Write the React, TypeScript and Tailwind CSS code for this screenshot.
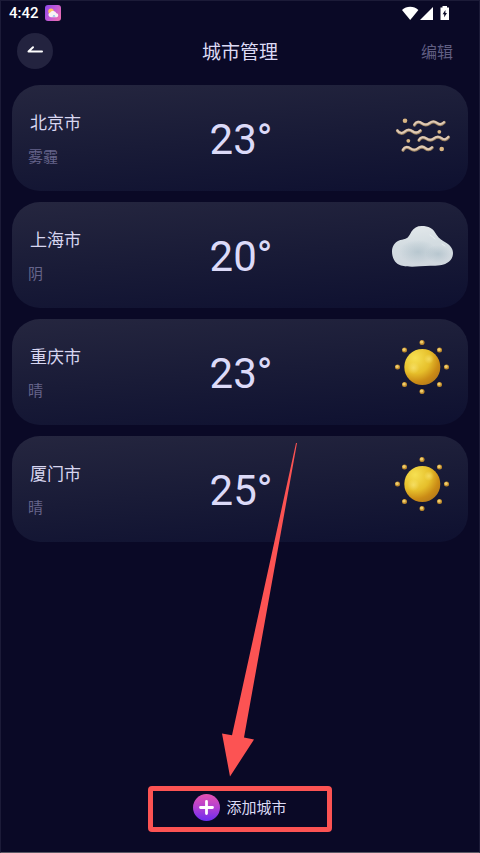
type IconName = 'haze' | 'cloud' | 'sun';

interface City {
  name: string;
  condition: string;
  temp: number;
  icon: IconName;
}

const cities: City[] = [
  { name: '北京市', condition: '雾霾', temp: 23, icon: 'haze' },
  { name: '上海市', condition: '阴', temp: 20, icon: 'cloud' },
  { name: '重庆市', condition: '晴', temp: 23, icon: 'sun' },
  { name: '厦门市', condition: '晴', temp: 25, icon: 'sun' },
];

// small beads around the sun
const rays = [
  [32, 7.5], [49.5, 15], [56.5, 32], [49.5, 49.5],
  [32, 56.5], [14.5, 49.5], [7.5, 32], [14.5, 15],
];

function SunIcon({ id }: { id: string }) {
  return (
    <svg viewBox="0 0 64 64" className="size-16" aria-hidden="true">
      <defs>
        <radialGradient id={`${id}-body`} cx="0.3" cy="0.25" r="0.85">
          <stop offset="0" stopColor="#f6e052" />
          <stop offset="0.5" stopColor="#e6bf2b" />
          <stop offset="0.78" stopColor="#cb8c16" />
          <stop offset="1" stopColor="#b5791a" />
        </radialGradient>
        <radialGradient id={`${id}-glow`}>
          <stop offset="0" stopColor="#fff08a" stopOpacity="0.5" />
          <stop offset="1" stopColor="#fff08a" stopOpacity="0" />
        </radialGradient>
      </defs>
      <circle cx="32.3" cy="32" r="18" fill={`url(#${id}-body)`} />
      <circle cx="23.5" cy="33" r="6" fill={`url(#${id}-glow)`} />
      <circle cx="39" cy="24" r="5" fill={`url(#${id}-glow)`} />
      {rays.map(([x, y]) => (
        <g key={`${x}-${y}`}>
          <circle cx={x} cy={y} r="2.5" fill="#c18c2c" />
          <circle cx={x - 0.4} cy={y - 0.5} r="1.6" fill="#efcd6c" />
        </g>
      ))}
    </svg>
  );
}

function CloudIcon({ id }: { id: string }) {
  return (
    <svg viewBox="0 0 64 64" className="size-16" aria-hidden="true">
      <defs>
        <linearGradient id={`${id}-body`} x1="0" y1="0" x2="0.15" y2="1">
          <stop offset="0" stopColor="#e4e9ec" />
          <stop offset="0.5" stopColor="#d3dce1" />
          <stop offset="1" stopColor="#d0d7de" />
        </linearGradient>
        <radialGradient id={`${id}-shade`}>
          <stop offset="0" stopColor="#a9bcc6" stopOpacity="0.65" />
          <stop offset="1" stopColor="#a9bcc6" stopOpacity="0" />
        </radialGradient>
      </defs>
      <path
        d="M31.7 8C27 8 23.800 10 21.500 13.500C19.500 17 18.500 19.700 15.500 20.700C13 21.500 11 21.600 8.500 22.700C4.500 24.600 2 28.500 2 33.500C2 40.500 5.500 46 11 47.500C17 49 24 48.800 30 48.300C37 47.700 44 48.200 50 47.300C58 46.200 63 41.500 63 35C63 31 60.500 27.500 56.500 25C52.500 22.500 49 20.500 46.700 17C44.500 13.500 43.500 11.500 40.500 9.900C38 8.500 35 8 31.700 8Z"
        fill={`url(#${id}-body)`}
      />
      <ellipse cx="28" cy="34" rx="19" ry="12" fill={`url(#${id}-shade)`} />
      <ellipse cx="48" cy="36" rx="13" ry="9" fill={`url(#${id}-shade)`} />
      <path d="M40 17q3 2 5 4M52 26l3 2" stroke="#f4f7f8" strokeWidth="1" strokeLinecap="round" fill="none" opacity="0.6" />
    </svg>
  );
}

const waves = [
  'M24.500 24c2-3.500 5-3.300 7.500-1.500s5 2 7.500 0s5-2.400 7.500-.3s5 1.600 7.200-.7',
  'M7.500 29.800c2 3 5 3.200 7.500 1s5-2.200 7.500-.3s5.500 2 8-.7',
  'M29 39.300c2-3.500 5-3.300 7.500-1.500s5 2 7.500 0s5-2.400 7.500-.3s5 1.400 7-1.200',
  'M13 49.200c2-3.500 5-3.300 7.500-1.500s5 2 7.500 0s5-2.400 7.500-.3s4.500 1.600 6.700-.7',
];

function HazeIcon() {
  return (
    <svg viewBox="0 0 64 64" className="size-16" aria-hidden="true">
      <g fill="none" strokeLinecap="round" strokeLinejoin="round">
        {waves.map((d) => (
          <g key={d}>
            <path d={d} stroke="#9c8260" strokeWidth="3.200" />
            <path d={d} stroke="#dfcab6" strokeWidth="2" transform="translate(-0.2 -0.4)" />
          </g>
        ))}
      </g>
      <g fill="#d9b684">
        <circle cx="15" cy="19.800" r="2.300" />
        <circle cx="49.300" cy="30.800" r="1.900" />
        <circle cx="18.300" cy="39.800" r="1.900" />
        <circle cx="51.700" cy="48" r="2.300" />
      </g>
    </svg>
  );
}

function WeatherIcon({ name, id }: { name: IconName; id: string }) {
  if (name === 'haze') return <HazeIcon />;
  if (name === 'cloud') return <CloudIcon id={id} />;
  return <SunIcon id={id} />;
}

function StatusBar() {
  return (
    <div className="flex h-6 items-center justify-between pl-2 pr-7">
      <div className="flex items-center gap-1.5">
        <span className="font-[Roboto,sans-serif] text-[15px] font-medium leading-5 text-white">4:42</span>
        <svg viewBox="0 0 16 16" className="size-4" aria-hidden="true">
          <defs>
            <linearGradient id="app-bg" x1="0" y1="0" x2="1" y2="0.6">
              <stop offset="0" stopColor="#8b46ea" />
              <stop offset="0.55" stopColor="#c05ad8" />
              <stop offset="1" stopColor="#e56bb5" />
            </linearGradient>
          </defs>
          <rect width="16" height="16" rx="3" fill="url(#app-bg)" />
          <circle cx="6" cy="6.300" r="2.700" fill="#ffc45c" />
          <path d="M5.800 12.300a2.500 2.500 0 0 1-.6-4.900a3.500 3.500 0 0 1 6.200.8a2.100 2.100 0 0 1 .4 4.100z" fill="#f7f3f5" />
          <path d="M7.500 11.500q1.500-2.500 3 0z" fill="#6fb6e8" />
        </svg>
      </div>
      <svg viewBox="0 0 50 16" className="h-4 w-[50px]" fill="#fff" aria-hidden="true">
        <path d="M9.200 15L1 5C3.500 2.800 6 1.800 9.200 1.800s5.700 1 8.200 3.200z" />
        <path d="M32 2v13H19z" />
        <path fillRule="evenodd" d="M39.500 2.500h2V1h4.500v1.500h2V15h-8.500zM44.400 5l-2.800 4.300h1.600v3l2.800-4.300h-1.600z" />
      </svg>
    </div>
  );
}

function Header() {
  return (
    <header className="grid h-[52px] grid-cols-[1fr_auto_1fr] items-center px-4">
      <button type="button" aria-label="返回" className="flex size-9 items-center justify-center rounded-full bg-[#23233f]">
        <svg viewBox="0 0 18 18" className="size-[18px]" fill="none" stroke="#fff" strokeWidth="2" strokeLinecap="round" strokeLinejoin="round" aria-hidden="true">
          <path d="M16 9.500H2.500L7 5.300" />
        </svg>
      </button>
      <h1 className="text-[19px] leading-6 text-[#dcdaf4]">城市管理</h1>
      <button type="button" className="justify-self-end px-2.5 text-base leading-6 text-[#605e82]">编辑</button>
    </header>
  );
}

function CityCard({ city, id }: { city: City; id: string }) {
  return (
    <li className="grid h-[106px] grid-cols-[1fr_auto_1fr] items-center rounded-[28px] bg-linear-175 from-[#25263f] via-[#191b37] to-[#0e1030] pl-4 pr-3.5">
      <div className="flex flex-col gap-3">
        <h2 className="pl-0.5 text-[17px] leading-6 text-[#d8d6f0]">{city.name}</h2>
        <p className="text-[15px] leading-5 text-[#66648a]">{city.condition}</p>
      </div>
      <p className="pt-1 font-[Roboto,sans-serif] text-[42px] leading-[48px] text-[#dcdaf8]">{city.temp}°</p>
      <div className="self-start justify-self-end pt-4">
        <WeatherIcon name={city.icon} id={id} />
      </div>
    </li>
  );
}

function AddCity() {
  return (
    <div className="relative mx-auto mb-5 w-[184px] rounded-sm border-5 border-[#fc5353]">
      {/* pointer to the add button */}
      <svg viewBox="0 0 76 334" className="pointer-events-none absolute bottom-full left-[68px] mb-[14px] h-[334px] w-[76px]" fill="#fc5353" aria-hidden="true">
        <path d="M75 0h1L23 294.500L33 296.500L9 333.500L1 290.500L11 292.200Z" />
      </svg>
      <button type="button" className="flex h-9 w-full items-center justify-center gap-1.5 pb-1 text-[15px] leading-5 text-[#dcdaf4]">
        <svg viewBox="0 0 27 27" className="size-[27px]" aria-hidden="true">
          <defs>
            <linearGradient id="add-bg" x1="0" y1="0" x2="0" y2="1">
              <stop offset="0" stopColor="#e651b0" />
              <stop offset="0.5" stopColor="#b240d2" />
              <stop offset="1" stopColor="#6c2cf0" />
            </linearGradient>
          </defs>
          <circle cx="13.500" cy="13.500" r="13.500" fill="url(#add-bg)" />
          <path d="M13.500 7.500v12M7.500 13.500h12" stroke="#fff" strokeWidth="2.800" strokeLinecap="round" />
        </svg>
        添加城市
      </button>
    </div>
  );
}

export default function App() {
  return (
    <div className="flex min-h-screen flex-col border border-[#1c1b38] border-b-[#5b5a66] bg-[#0a0926] font-['Noto_Sans_CJK_SC',sans-serif]">
      <StatusBar />
      <Header />
      <main className="flex flex-1 flex-col justify-between pt-2">
        <ul className="flex flex-col gap-[11px] px-[11px]">
          {cities.map((city, i) => (
            <CityCard key={city.name} city={city} id={`city-${i}`} />
          ))}
        </ul>
        <AddCity />
      </main>
    </div>
  );
}
